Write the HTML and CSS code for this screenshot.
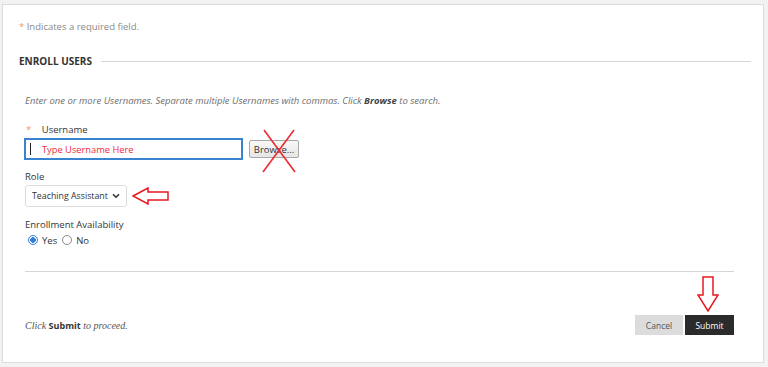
FILE: index.html
```html
<!DOCTYPE html>
<html lang="en">
<head>
    <meta charset="UTF-8">
    <meta name="viewport" content="width=device-width, initial-scale=1.0">
    <title>Enroll Users</title>
    <link rel="stylesheet" href="styles.css">
</head>
<body>
    <div class="card">
        <p class="required"><span class="star">*</span> Indicates a required field.</p>

        <div class="section-head">
            <h2>ENROLL USERS</h2>
            <div class="rule"></div>
        </div>

        <div class="form-body">
            <p class="instructions">Enter one or more Usernames. Separate multiple Usernames with commas. Click <b>Browse</b> to search.</p>

            <label class="field-label"><span class="star">*</span> Username</label>
            <div class="user-row">
                <div class="text-input">
                    <span class="caret"></span>
                    <span class="hint">Type Username Here</span>
                </div>
                <button class="browse-btn">Browse...</button>
                <!-- red cross drawn over the browse button -->
                <svg class="mark-cross" width="36" height="46" viewBox="0 0 36 46">
                    <line x1="3" y1="2" x2="34" y2="44" stroke="#ee2a2f" stroke-width="1.6"/>
                    <line x1="33" y1="2" x2="2" y2="44" stroke="#ee2a2f" stroke-width="1.6"/>
                </svg>
            </div>

            <label class="field-label">Role</label>
            <div class="role-row">
                <div class="select">
                    <span>Teaching Assistant</span>
                    <svg width="8" height="6" viewBox="0 0 8 6"><path d="M1 1.2 L4 4.2 L7 1.2" fill="none" stroke="#333" stroke-width="1.6"/></svg>
                </div>
                <svg class="arrow-left" width="38" height="18" viewBox="0 0 38 18">
                    <path d="M1 9 L16 1 L16 5 L36 5 L36 13 L16 13 L16 17 Z" fill="#fff" stroke="#e8171f" stroke-width="1.5" stroke-linejoin="miter"/>
                </svg>
            </div>

            <label class="field-label">Enrollment Availability</label>
            <div class="radios">
                <span class="radio checked"></span><span class="radio-text">Yes</span>
                <span class="radio"></span><span class="radio-text">No</span>
            </div>

            <hr class="divider">

            <div class="footer">
                <p class="proceed">Click <b>Submit</b> to proceed.</p>
                <div class="buttons">
                    <button class="btn-cancel">Cancel</button>
                    <button class="btn-submit">Submit</button>
                    <svg class="arrow-down" width="22" height="36" viewBox="0 0 22 36">
                        <path d="M6 1 L16 1 L16 19 L21 19 L11 35 L1 19 L6 19 Z" fill="#fff" stroke="#e8171f" stroke-width="1.5"/>
                    </svg>
                </div>
            </div>
        </div>
    </div>
</body>
</html>
```

FILE: styles.css
```css
body {
    margin: 0;
    padding: 4px 4px 4px 2px;
    background-color: #f2f2f2;
    font-family: "Open Sans", Arial, sans-serif;
    font-size: 9.5px;
    color: #333;
}

.card {
    height: 357px;
    background-color: #fff;
    border: 1px solid #dcdcdc;
    padding: 0 12px 0 16px;
}

p {
    margin: 0;
}

.star {
    color: #f0956a;
}

.required {
    margin-top: 15px;
    line-height: 14px;
    color: #8a8a8a;
}

.section-head {
    display: flex;
    align-items: center;
    margin-top: 20px;
    height: 14px;
}

.section-head h2 {
    margin: 0;
    font-size: 10px;
    font-weight: bold;
    color: #333;
    white-space: nowrap;
}

.rule {
    flex: 1;
    height: 1px;
    margin-left: 9px;
    background-color: #d6d6d6;
}

.form-body {
    margin: 0 17px 0 6px;
}

.instructions {
    margin-top: 26px;
    line-height: 14px;
    font-style: italic;
    color: #6e6e6e;
}

.instructions b {
    color: #444;
}

.field-label {
    display: block;
    line-height: 14px;
    margin-top: 10px;
    color: #333;
}

.form-body > .field-label:first-of-type {
    margin-top: 15px;
}

.field-label .star {
    margin: 0 8px 0 1px;
}

.user-row {
    position: relative;
    display: flex;
    align-items: center;
    margin-top: 1px;
}

.text-input {
    display: flex;
    align-items: center;
    box-sizing: border-box;
    width: 219px;
    height: 22px;
    margin-left: -1px;
    border: 2px solid #3a84cf;
    padding-left: 4px;
}

.caret {
    width: 1px;
    height: 12px;
    background-color: #222;
}

.hint {
    margin-left: 11px;
    color: #ee2a3c;
    font-size: 9.3px;
}

.browse-btn {
    box-sizing: border-box;
    width: 50px;
    height: 18px;
    margin-left: 6px;
    padding: 0;
    font-family: "Open Sans", Arial, sans-serif;
    font-size: 9.5px;
    color: #333;
    background: linear-gradient(#f8f8f8, #e6e6e6);
    border: 1px solid #a8a8a8;
    border-radius: 2px;
}

.mark-cross {
    position: absolute;
    left: 236px;
    top: -10px;
}

.role-row {
    display: flex;
    align-items: center;
    margin-top: 1px;
}

.select {
    display: flex;
    align-items: center;
    justify-content: space-between;
    box-sizing: border-box;
    width: 102px;
    height: 22px;
    padding: 0 6px 0 6px;
    border: 1px solid #dcdcdc;
    border-radius: 3px;
    color: #333;
    font-size: 8.8px;
    white-space: nowrap;
}

.arrow-left {
    margin-left: 5px;
}

.field-label + .radios {
    margin-top: 1px;
}

.role-row + .field-label {
    margin-top: 11px;
}

.radios {
    display: flex;
    align-items: center;
    height: 14px;
    padding-left: 3px;
}

.radio {
    box-sizing: border-box;
    width: 10px;
    height: 10px;
    border: 1px solid #8a8a8a;
    border-radius: 50%;
    background-color: #fff;
}

.radio.checked {
    border-color: #2f7fd8;
    background: radial-gradient(circle, #2f7fd8 0 2.6px, #fff 3px);
}

.radio-text {
    margin: 0 5px 0 4px;
}

.divider {
    margin: 24px 0 0;
    border: 0;
    height: 1px;
    background-color: #d6d6d6;
}

.footer {
    display: flex;
    justify-content: space-between;
    align-items: center;
    margin-top: 43px;
}

.proceed {
    font-family: "Liberation Serif", "Times New Roman", serif;
    font-style: italic;
    font-size: 10px;
    color: #555;
}

.proceed b {
    font-family: "Open Sans", Arial, sans-serif;
    font-style: normal;
    font-size: 9px;
    color: #333;
}

.buttons {
    position: relative;
    display: flex;
    gap: 2px;
}

.buttons button {
    height: 20px;
    border: 0;
    padding: 0;
    font-family: "Open Sans", Arial, sans-serif;
    font-size: 8.5px;
}

.btn-cancel {
    width: 48px;
    background-color: #dcdcdc;
    color: #555;
}

.btn-submit {
    width: 49px;
    background-color: #2b2b2b;
    color: #fff;
}

.arrow-down {
    position: absolute;
    left: 62px;
    top: -39px;
}
```
